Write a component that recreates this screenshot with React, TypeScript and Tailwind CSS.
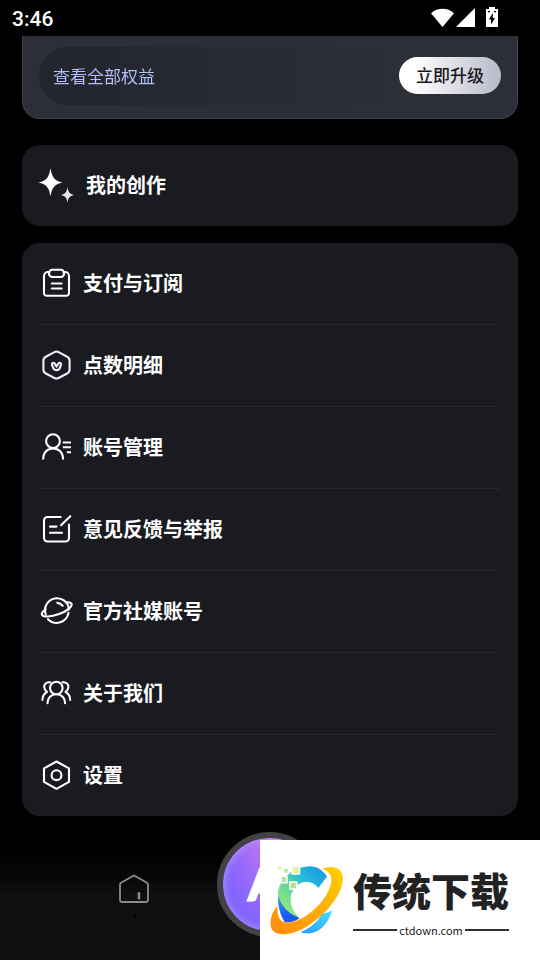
import React from 'react';

interface IconProps {
  className?: string;
}

interface MenuItem {
  id: string;
  title: string;
  icon: React.ComponentType<IconProps>;
}

const strokeProps = {
  viewBox: '0 0 34 34',
  fill: 'none',
  stroke: 'currentColor',
  strokeWidth: 2.1,
  strokeLinecap: 'round',
  strokeLinejoin: 'round',
  'aria-hidden': true,
} as const;

function ClipboardIcon({ className }: IconProps) {
  return (
    <svg {...strokeProps} className={className}>
      <path d="M9.500 6H8a4 4 0 0 0-4 4V27A2.800 2.800 0 0 0 6.800 29.800H26.200A2.800 2.800 0 0 0 29 27V10a4 4 0 0 0-4-4h-1.500" />
      <rect x="9" y="3.800" width="15" height="7.200" rx="3.200" />
      <path d="M11.800 17.500h9.800M11.800 22.500h9.800" />
    </svg>
  );
}

function PointsIcon({ className }: IconProps) {
  return (
    <svg {...strokeProps} className={className} stroke="#efedff">
      <path d="M14.400 4.100a4.500 4.500 0 0 1 4.200 0l8.600 4.600a4.500 4.500 0 0 1 2.400 4v8.800a4.500 4.500 0 0 1-2.400 4L18.600 30a4.500 4.500 0 0 1-4.200 0l-8.600-4.500a4.500 4.500 0 0 1-2.400-4v-8.800a4.500 4.500 0 0 1 2.400-4z" />
      <path d="M14.400 15.200c-1.500-.8-2.800.3-2.400 1.700l1.400 3.500c.6 1.200 1.600 1.700 3.100 1.700s2.500-.5 3.100-1.700l1.400-3.500c.4-1.400-.9-2.500-2.400-1.700l-2.100 3.300z" strokeWidth={2.200} />
    </svg>
  );
}

function AccountIcon({ className }: IconProps) {
  return (
    <svg {...strokeProps} className={className}>
      <circle cx="13" cy="11.200" r="6.900" />
      <path d="M3.200 28.800c0-6.200 4.100-10.300 9.900-10.300S23 22.600 23 28.800" />
      <path d="M22.800 12.500h8.200M22.800 17.200h8.200M26.800 22.200H31" strokeLinecap="butt" />
    </svg>
  );
}

function FeedbackIcon({ className }: IconProps) {
  return (
    <svg {...strokeProps} className={className}>
      <path d="M20.700 5H7.500A3.500 3.500 0 0 0 4 8.500V26a3.500 3.500 0 0 0 3.500 3.500h18A3.500 3.500 0 0 0 29 26V12.500" />
      <path d="M21 13.300 30.300 4.200M10 14.600h6.500M10 20.700h12" />
    </svg>
  );
}

function PlanetIcon({ className }: IconProps) {
  return (
    <svg {...strokeProps} className={className}>
      <path d="M5.800 20.500A12 12 0 1 1 29 15.500M8 25.200a12 12 0 0 0 20.500-6.500" />
      <path d="M5.600 15.300c-3 2-4.300 3.900-3.600 5.500 1.200 2.600 8.800 2.300 17-.7s13.700-7.600 12.500-10.300c-.6-1.200-2.300-1.700-4.900-1.500" />
      <path d="M17.300 8.900a8 8 0 0 1 5.400 2.800" />
    </svg>
  );
}

function PeopleIcon({ className }: IconProps) {
  return (
    <svg {...strokeProps} className={className}>
      <circle cx="16.300" cy="12" r="6.300" />
      <path d="M7.500 27.300c0-5.300 3.500-9 8.800-9s8.800 3.700 8.800 9" />
      <path d="M10 6.300c-3.700-.4-6 2-5.800 5 .1 2.200 1.100 3.200 2.800 4.500-2.900 1.800-4.600 4.400-4.600 8.200M22.600 6.300c3.700-.4 6 2 5.800 5-.1 2.200-1.100 3.200-2.800 4.500 2.900 1.800 4.600 4.400 4.600 8.200" />
    </svg>
  );
}

function SettingsIcon({ className }: IconProps) {
  return (
    <svg {...strokeProps} className={className}>
      <path d="M16.500 3.500 29 10.400v13.500L16.500 30.800 4 23.900V10.400z" />
      <circle cx="16.500" cy="17.200" r="4.900" />
    </svg>
  );
}

const menuItems: MenuItem[] = [
  { id: 'billing', title: '支付与订阅', icon: ClipboardIcon },
  { id: 'points', title: '点数明细', icon: PointsIcon },
  { id: 'account', title: '账号管理', icon: AccountIcon },
  { id: 'feedback', title: '意见反馈与举报', icon: FeedbackIcon },
  { id: 'social', title: '官方社媒账号', icon: PlanetIcon },
  { id: 'about', title: '关于我们', icon: PeopleIcon },
  { id: 'settings', title: '设置', icon: SettingsIcon },
];

function StatusBar() {
  return (
    <header className="flex h-9 items-end justify-between pr-10 pb-[7px] pl-3 text-white">
      <span className="font-['Roboto',sans-serif] text-[21px] leading-5 font-medium">3:46</span>
      <svg viewBox="0 0 70 22" className="h-[22px] w-[70px]" fill="currentColor" aria-hidden="true">
        <path d="M1 6.200C7.500.400 17.500.400 24 6.200L12.500 20z" />
        <path d="M45 1v19H26z" />
        <path
          fillRule="evenodd"
          d="M59 0h6v2h2.500q.5 0 .5.500v17q0 .5-.5.500h-11q-.5 0-.5-.500v-17q0-.5.5-.500H59zM62.800 6l-4 6.500h2.300v5l3.900-6.500h-2.200zM58 4v1.200h2V4zM64 4v1.200h2V4z"
        />
      </svg>
    </header>
  );
}

function UpgradeCard() {
  return (
    <section className="rounded-b-[18px] border border-t-0 border-[#41434b] bg-[#2d2f38] px-4 pt-[11px] pb-[13px]">
      <div className="flex h-[58px] items-center justify-between rounded-full bg-linear-to-r from-[#23252d] to-[#2d2f38] to-75% pb-px pl-[14px]">
        <a href="#benefits" className="bg-linear-to-r from-[#adbfff] via-[#bcbcf8] to-[#adc4ff] bg-clip-text text-[17px] text-transparent">
          查看全部权益
        </a>
        <button
          type="button"
          className="h-[37px] rounded-full bg-linear-to-r from-white from-15% to-[#b8bac8] px-[17px] pb-px text-[17px] font-medium text-[#17181d]"
        >
          立即升级
        </button>
      </div>
    </section>
  );
}

function CreationsCard() {
  return (
    <button type="button" className="mt-[26px] flex h-[81px] items-center gap-3 rounded-[18px] bg-[#1a1b20] pb-px pl-4 text-[20px] font-bold text-white">
      <svg viewBox="0 0 36 36" className="h-9 w-9" fill="currentColor" aria-hidden="true">
        <path d="M12.500 1c1.500 9 3.500 12.500 12 14.500-8.500 2-10.500 5-12 14C11 20.500 9 17.500.500 15.500 9 13.500 11 10 12.500 1z" />
        <path d="M29.500 20c.8 4.900 2 6.800 6.500 8-4.500 1.200-5.700 2.900-6.500 7.800-.8-4.900-2-6.600-6.500-7.800 4.500-1.200 5.700-3.100 6.500-8z" fill="#e4e4e6" />
      </svg>
      <span>我的创作</span>
    </button>
  );
}

function MenuList() {
  return (
    <ul className="mt-[17px] divide-y divide-[#25262e] rounded-[18px] bg-[#1a1b20] px-[18px]">
      {menuItems.map((item) => (
        <li key={item.id}>
          <button type="button" className="flex h-[81px] w-full items-center gap-[9px] pb-px text-[20px] font-bold text-white">
            <item.icon className="h-[34px] w-[34px]" />
            <span>{item.title}</span>
          </button>
        </li>
      ))}
    </ul>
  );
}

function BottomNav() {
  return (
    <nav className="grid flex-1 grid-cols-2 items-start bg-linear-to-b from-black to-[#0f0f11] to-55% pt-4">
      <button type="button" aria-label="首页" className="mt-[41px] flex flex-col items-center gap-[10px] text-[#8c8c8e]">
        <svg {...strokeProps} viewBox="0 0 32 32" className="h-8 w-8">
          <path d="M15 2.500 28 9.800q1 .7 1 2v15q0 2.200-2.200 2.200H3.200Q1 29 1 26.800v-15q0-1.300 1-2z" strokeWidth={1.800} />
          <path d="M20 20.300v5" strokeWidth={2.600} />
        </svg>
        <span className="h-[3px] w-[3px] rounded-full bg-black" />
      </button>
      <button
        type="button"
        className="-ml-[53px] flex h-[105px] w-[105px] items-center justify-center rounded-full border-[6px] border-[#424244] bg-radial-[at_60%_0%] from-[#d97bea] via-[#9268fc] via-55% to-[#6a5cff] font-['Lato',sans-serif] text-[42px] font-bold text-white shadow-[inset_0_0_8px_#b9a2ff] [-webkit-text-stroke:3px_white]"
      >
        AI
      </button>
    </nav>
  );
}

function BrandMark() {
  return (
    <svg viewBox="0 0 76 72" className="h-[72px] w-[76px] shrink-0" aria-hidden="true">
      <defs>
        <linearGradient id="ring" x1="0" y1="1" x2="1" y2="0">
          <stop offset="0" stopColor="#ff8a0c" />
          <stop offset="1" stopColor="#ffd000" />
        </linearGradient>
        <linearGradient id="arc" x1="0" y1="1" x2="1" y2="0">
          <stop offset="0.100" stopColor="#9bed74" />
          <stop offset="0.450" stopColor="#5bd3a0" />
          <stop offset="0.620" stopColor="#27bcd5" />
          <stop offset="1" stopColor="#1594e6" />
        </linearGradient>
        <linearGradient id="deep" x1="0" y1="0" x2="1" y2="1">
          <stop offset="0" stopColor="#2f9fe0" />
          <stop offset="0.500" stopColor="#1b5ff2" />
          <stop offset="1" stopColor="#1750f0" />
        </linearGradient>
        <linearGradient id="drop" x1="0" y1="1" x2="1" y2="0">
          <stop offset="0" stopColor="#279cf4" />
          <stop offset="1" stopColor="#4be0ff" />
        </linearGradient>
      </defs>
      <path d="M37 3C46 .500 54 5 59 12.500L50.500 24C44 16 34 16 27.500 23 20 31 21 43 31 54 17 49 9 40 10 28 12 15 24 4 37 3z" fill="url(#arc)" />
      <path d="M10 32c4 11 11 18 21.500 22-3 3-9 4.500-14.500 4.500C12 51 9.500 41 10 32z" fill="url(#deep)" />
      <path
        d="M54 5C64 .500 75 3 75 15.500 74 33 52 58 30 67 14 73 2 71 2.500 58.500 2.800 52 5 46.500 9.500 42 9 52 11 58 19 58.500 31 58.500 47 48 57 33 65 20 67 9 54 5z"
        fill="url(#ring)"
      />
      <path d="M32.500 68C41 65 49 58.500 54.500 49.500 58 49 61 48 64 46.500 61 60 48 74 32.500 68z" fill="url(#drop)" />
      <g stroke="#fff" strokeWidth="1.500">
        <path d="M24 2h7.500v8H24z" fill="#e3f39a" />
        <path d="M21.800 18h7v7h-7z" fill="#b6e58b" />
        <path d="M13 12.300h6v6.500h-6z" fill="#b1e591" />
        <path d="M15.500 4h5v5.500h-5z" fill="#b9eb9b" />
      </g>
      <path d="M10 2h3v3.500h-3z" fill="#e3f6ac" />
    </svg>
  );
}

function DownloadBadge() {
  return (
    <aside className="fixed right-0 bottom-0 flex h-[120px] w-[280px] items-center gap-[9px] bg-white pl-2 text-[#222]">
      <BrandMark />
      <div className="w-[156px] pt-px">
        <p className="text-center text-[39px] leading-[52px] font-black whitespace-nowrap">传统下载</p>
        <div className="flex items-center gap-[2px] pt-[7px]">
          <span className="h-[2px] flex-1 bg-[#333]" />
          <span className="text-[11px] leading-4">ctdown.com</span>
          <span className="h-[2px] flex-1 bg-[#333]" />
        </div>
      </div>
    </aside>
  );
}

export default function App() {
  return (
    <div className="flex min-h-screen flex-col bg-black font-['Noto_Sans_CJK_SC',sans-serif]">
      <StatusBar />
      <main className="flex flex-col px-[22px]">
        <UpgradeCard />
        <CreationsCard />
        <MenuList />
      </main>
      <BottomNav />
      <DownloadBadge />
    </div>
  );
}
